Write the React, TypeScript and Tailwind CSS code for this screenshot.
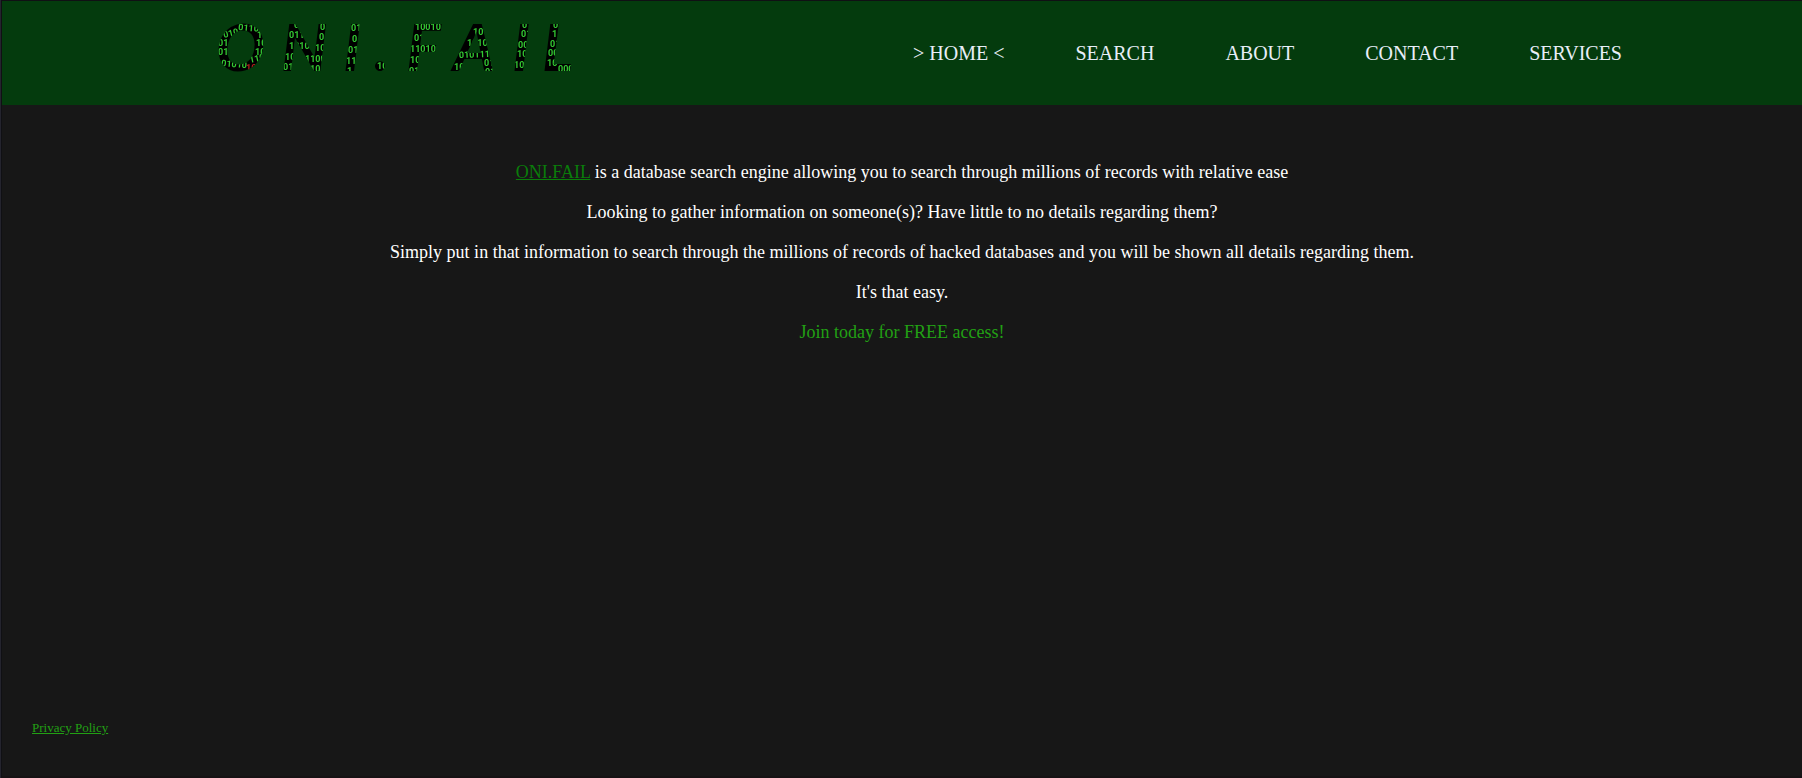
const NAV = ['> HOME <', 'SEARCH', 'ABOUT', 'CONTACT', 'SERVICES'];

const LETTERS: [string, number][] = [
  ['O', 6], ['N', 71], ['I', 133], ['.', 164], ['F', 196], ['A', 243], ['I', 302], ['L', 332],
];

// [text, x, y, rotation]
const DIGITS: [string, number, number, number][] = [
  ['01100', 28, 12, 5], ['010', 14, 20, -14], ['01', 8, 28, 0], ['01', 8, 37, 0],
  ['01010', 11, 48, 5], ['10', 47, 20, 0], ['10', 46, 28, 0], ['10', 45, 37, 0], ['110', 40, 45, -12],
  ['00', 84, 10, 0], ['011', 79, 20, 0], ['1010', 79, 31, 0], ['10', 75, 42, 0], ['01', 73, 52, 0],
  ['01', 110, 12, 0], ['0', 109, 22, 0], ['10', 105, 33, 0], ['1100', 95, 44, 0], ['10', 100, 54, 0],
  ['01', 141, 13, 0], ['0', 142, 24, 0], ['01', 138, 35, 0], ['11', 136, 46, 0], ['1', 137, 56, 0],
  ['10', 167, 51, 0],
  ['10010', 205, 12, 0], ['01', 204, 23, 0], ['11010', 200, 34, 0], ['10', 200, 45, 0], ['01', 199, 56, 0],
  ['101', 263, 17, 0], ['1010', 257, 28, 0], ['0101111', 249, 40, -2], ['10', 244, 52, 0], ['01', 274, 48, 0], ['01', 275, 57, 0],
  ['01', 312, 10, 0], ['01', 311, 19, 0], ['00', 308, 30, 0], ['10', 307, 39, 0], ['10', 304, 50, 0],
  ['01', 343, 10, 0], ['11', 342, 19, 0], ['01', 340, 29, 0], ['00', 338, 38, 0], ['10', 337, 48, 0], ['000', 348, 54, 0],
];

function Letters() {
  return LETTERS.map(([c, x]) => (
    <text key={x} x={x} y={53} fontFamily="Lato, sans-serif" fontSize={65} fontWeight={700} fontStyle="italic">
      {c}
    </text>
  ));
}

function Logo() {
  return (
    <svg width="372" height="60" viewBox="0 0 372 60" role="img" aria-label="ONI.FAIL">
      <defs>
        <clipPath id="logo-letters">{Letters()}</clipPath>
      </defs>
      {Letters()}
      <g clipPath="url(#logo-letters)" fontFamily="Roboto, sans-serif" fontSize={9} fontWeight={700} fill="#32c832">
        {DIGITS.map(([t, x, y, r], i) => (
          <text key={i} x={x} y={y} transform={`rotate(${r} ${x} ${y})`}>
            {t}
          </text>
        ))}
        <text x={36} y={53} fill="#b41e1e">10</text>
      </g>
    </svg>
  );
}

export default function App() {
  return (
    <div className="flex min-h-screen flex-col border-l border-[#24242e] bg-neutral-900 font-['Liberation_Serif',serif] text-white">
      <div className="flex grow flex-col border-t border-l border-b-2 border-[#101014] border-b-[#161214]">
        <header className="bg-[#043b0d]">
          <div className="mx-auto flex h-26 w-4/5 items-start justify-between">
            <a href="#" className="ml-7 mt-[17px] block">
              <Logo />
            </a>
            <nav className="mt-10 flex gap-[71px] text-[20px] leading-6 text-[#e8eef8]">
              {NAV.map((label) => (
                <a key={label} href="#">{label}</a>
              ))}
            </nav>
          </div>
        </header>

        <main className="flex grow flex-col items-center gap-5 pt-[57px] text-center text-[18px] leading-5">
          <p>
            <a href="#" className="text-[#0a7d0a] underline">ONI.FAIL</a> is a database search engine allowing you to
            search through millions of records with relative ease
          </p>
          <p>Looking to gather information on someone(s)? Have little to no details regarding them?</p>
          <p>
            Simply put in that information to search through the millions of records of hacked databases and you will be
            shown all details regarding them.
          </p>
          <p>It's that easy.</p>
          <p className="text-[#22a014]">Join today for FREE access!</p>
        </main>

        <footer className="px-[30px] pb-10 text-[13px] leading-4">
          <a href="#" className="text-[#22a014] underline">Privacy Policy</a>
        </footer>
      </div>
    </div>
  );
}
